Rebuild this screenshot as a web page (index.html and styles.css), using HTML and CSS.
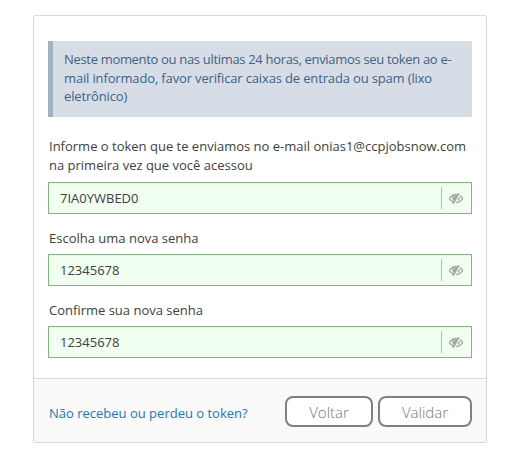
FILE: index.html
```html
<!DOCTYPE html>
<html lang="pt-BR">
<head>
<meta charset="utf-8">
<title>Validar token</title>
<link rel="stylesheet" href="styles.css">
</head>
<body>
<svg width="0" height="0" class="sprite">
  <symbol id="eye-slash" viewBox="0 0 1792 1792"><path d="M555 1335l78-141q-87-63-136-159t-49-203q0-121 61-225-229 117-381 353 167 258 427 375zm389-759q0-20-14-34t-34-14q-125 0-214.500 89.500t-89.500 214.500q0 20 14 34t34 14 34-14 14-34q0-86 61-147t147-61q20 0 34-14t14-34zm363-191q0 7-1 9-106 189-316 567t-315 566l-49 89q-10 16-28 16-12 0-134-70-16-10-16-28 0-12 44-87-143-65-263.500-173t-208.500-245q-20-31-20-69t20-69q153-235 380-371t496-136q89 0 180 17l54-97q10-16 28-16 5 0 18 6t31 15.500 33 18.500 31.500 18.500 19.500 11.500q16 10 16 27zm37 447q0 139-79 253.500t-209 164.500l280-502q8 45 8 84zm448 128q0 35-20 69-39 64-109 145-150 172-347.500 267t-419.500 95l74-132q212-18 392.500-137t301.500-307q-115-179-282-294l63-112q95 64 182.500 153t144.500 184q20 34 20 69z"/></symbol>
</svg>
<form class="card">
  <div class="body">
    <div class="alert"><span class="tight">Neste momento ou nas ultimas 24 horas, enviamos seu token ao e-</span><br>mail informado, favor verificar caixas de entrada ou spam (lixo<br>eletrônico)</div>
    <label for="token">Informe o token que te enviamos no e-mail onias1@ccpjobsnow.com<br>na primeira vez que você acessou</label>
    <div class="field"><input id="token" type="text" value="7IA0YWBED0"><span class="toggle"><svg class="icon"><use href="#eye-slash"/></svg></span></div>
    <label for="senha">Escolha uma nova senha</label>
    <div class="field"><input id="senha" type="text" value="12345678"><span class="toggle"><svg class="icon"><use href="#eye-slash"/></svg></span></div>
    <label for="confirma">Confirme sua nova senha</label>
    <div class="field"><input id="confirma" type="text" value="12345678"><span class="toggle"><svg class="icon"><use href="#eye-slash"/></svg></span></div>
  </div>
  <div class="footer">
    <a class="link" href="#">Não recebeu ou perdeu o token?</a>
    <button class="btn" type="button">Voltar</button>
    <button class="btn btn-validate" type="button">Validar</button>
  </div>
</form>
</body>
</html>
```
FILE: styles.css
```css
* { box-sizing: border-box; }
body {
  margin: 0;
  padding: 15px 0 0 33px;
  background: #fff;
  color: #404040;
  font: 13px/19px "Open Sans", sans-serif;
}
.sprite { display: block; }
.card {
  width: 454px;
  height: 428px;
  border: 1px solid #d8d8d8;
  border-radius: 2px;
  box-shadow: 0 1px 1px rgba(0, 0, 0, .1);
}
.body { height: 362px; padding: 25px 14px 0; }
.alert {
  height: 76px;
  margin-bottom: 20px;
  padding: 9px 0 0 11px;
  border-left: 5px solid #9fb3c4;
  background: #d6dde7;
  color: #3d6384;
  font: 13px/18.5px "Open Sans", sans-serif;
  letter-spacing: -.15px;
  white-space: nowrap;
}
.tight { letter-spacing: -.32px; }
label {
  display: block;
  padding-left: 1px;
  margin-bottom: 7px;
  white-space: nowrap;
}
.field + label { margin-bottom: 6px; }
.field {
  display: flex;
  align-items: center;
  height: 32px;
  margin-bottom: 15px;
  border: 1px solid #7fb87f;
  background: #f0fff0;
}
input {
  flex: 1;
  min-width: 0;
  height: 30px;
  padding: 0 11px;
  border: 0;
  outline: 0;
  background: transparent;
  color: #404040;
  font: 13px "Open Sans", sans-serif;
}
.toggle {
  display: flex;
  align-items: center;
  width: 30px;
  height: 22px;
  padding-left: 7px;
  border-left: 1px solid #b3bfb3;
}
.icon {
  width: 14px;
  height: 14px;
  fill: #a0a5a0;
  stroke: #a0a5a0;
  stroke-width: 50px;
}
.footer {
  display: flex;
  height: 64px;
  padding: 17px 14px 0 15px;
  border-top: 1px solid #d8d8d8;
  background: #f9f9f9;
}
.link {
  flex: 1;
  padding-top: 8px;
  color: #2276bb;
  text-decoration: none;
}
.btn {
  width: 88px;
  height: 31px;
  margin-left: 5px;
  padding: 1px 0 0;
  border: 2px solid #808080;
  border-radius: 8px;
  background: #fff;
  color: #777;
  font: 300 15px "Open Sans", sans-serif;
}
.btn-validate { width: 94px; }
```
